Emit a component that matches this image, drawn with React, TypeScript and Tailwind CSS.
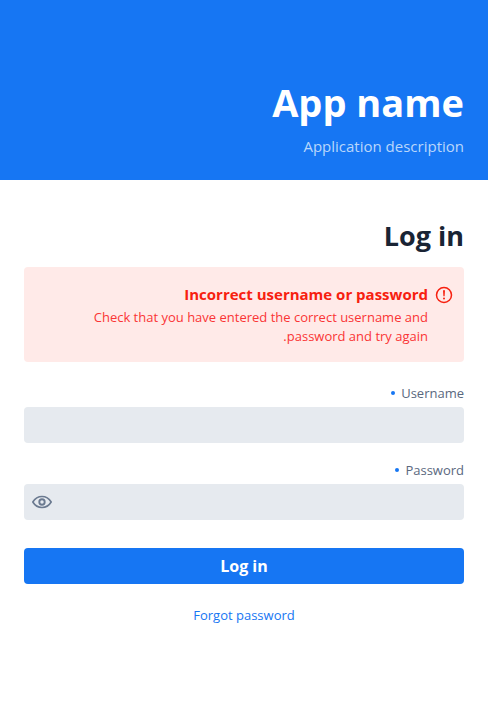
import React, { useState } from "react";

function AlertIcon() {
  return (
    <svg viewBox="0 0 18 18" className="size-[18px] shrink-0" fill="none" aria-hidden="true">
      <circle cx="9" cy="9" r="7.5" stroke="#f7200f" strokeWidth="1.5" />
      <path d="M8 4.200h2l-.4 6h-1.200z" fill="#f7200f" />
      <circle cx="9" cy="12.500" r="1" fill="#f7200f" />
    </svg>
  );
}

function EyeIcon() {
  return (
    <svg viewBox="0 0 20 14" className="h-3.5 w-5" fill="none" stroke="#6b7a90" aria-hidden="true">
      <path d="M.8 7C3 3.400 6.100 1.500 10 1.500S17 3.400 19.200 7C17 10.600 13.900 12.500 10 12.500S3 10.600 .8 7Z" strokeWidth="1.600" strokeLinejoin="round" />
      <circle cx="10" cy="7" r="2.700" strokeWidth="1.900" />
    </svg>
  );
}

type FieldProps = {
  id: string;
  label: string;
  type: string;
  children?: React.ReactNode;
};

function Field({ id, label, type, children }: FieldProps) {
  return (
    <div className="flex flex-col gap-1">
      <label htmlFor={id} className="flex items-center gap-1.5 text-[13px] leading-5 text-[#5a687e]">
        {label}
        <span className="size-1 rounded-full bg-[#1676f3]" aria-hidden="true" />
      </label>
      <div className="flex h-9 items-center rounded bg-[#e6eaef] px-2">
        <input id={id} type={type} required className="h-full min-w-0 flex-1 bg-transparent text-base text-[#192434] outline-none" />
        {children}
      </div>
    </div>
  );
}

export default function App() {
  const [visible, setVisible] = useState(false);

  return (
    <div dir="rtl" className="min-h-screen bg-white font-['Open_Sans','Noto_Sans',sans-serif]">
      <header className="flex h-[180px] flex-col justify-end bg-[#1676f3] px-6 pb-[22px] text-white">
        <h1 className="text-[38px] leading-[50px] font-bold">App name</h1>
        <p className="mt-[7px] text-[15px] leading-6 text-[#b9d6fb]">Application description</p>
      </header>

      <main className="px-6 pt-9">
        <h2 className="text-[27px] leading-10 font-bold text-[#192434]">Log in</h2>

        <div role="alert" className="mt-[11px] flex items-start gap-[7px] rounded bg-[#ffeae8] px-[11px] py-[15px]">
          <div className="mt-1">
            <AlertIcon />
          </div>
          <div className="pb-px pl-10">
            <h3 className="text-[15px] leading-6 font-bold text-[#f7200f]">Incorrect username or password</h3>
            <p className="mt-0.5 text-[13px] leading-[19px] text-[#fa3535]">
              Check that you have entered the correct username and password and try again.
            </p>
          </div>
        </div>

        <form className="mt-[21px]" onSubmit={(event) => event.preventDefault()}>
          <div className="flex flex-col gap-[17px]">
            <Field id="username" label="Username" type="text" />
            <Field id="password" label="Password" type={visible ? "text" : "password"}>
              <button type="button" aria-label="Show password" onClick={() => setVisible(!visible)}>
                <EyeIcon />
              </button>
            </Field>
          </div>
          <button type="submit" className="mt-7 h-9 w-full rounded bg-[#1676f3] text-base leading-6 font-bold text-white">
            Log in
          </button>
        </form>

        <div className="mt-[19px] flex justify-center">
          <a href="#forgot" className="text-[13px] leading-6 text-[#1676f3]">Forgot password</a>
        </div>
      </main>
    </div>
  );
}
